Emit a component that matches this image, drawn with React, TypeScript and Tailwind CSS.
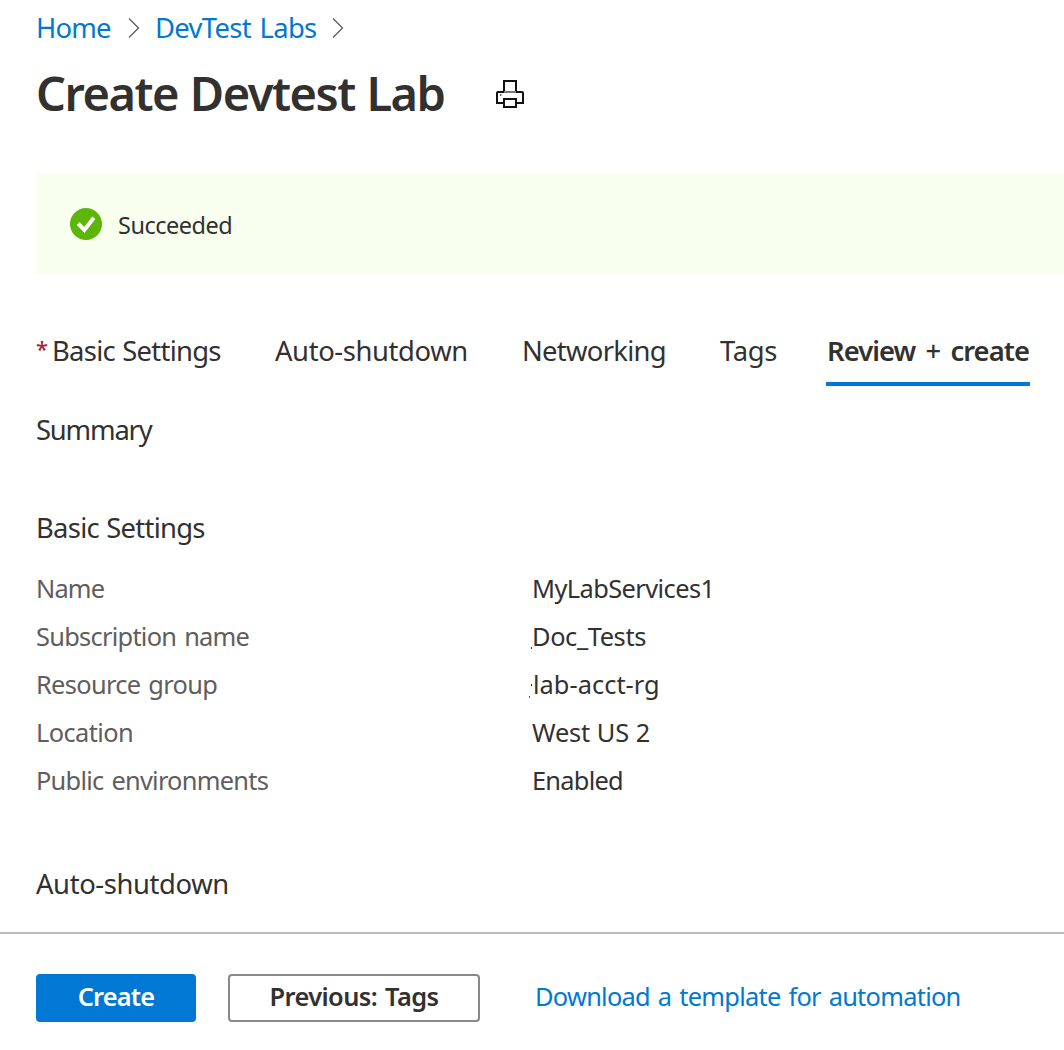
const details = [
  { label: "Name", labelClass: "tracking-[-0.85px]", value: "MyLabServices1", valueClass: "tracking-[-0.58px]" },
  { label: "Subscription name", labelClass: "tracking-[-0.73px] [word-spacing:2px]", value: "Doc_Tests", valueClass: "tracking-[-0.4px]", mark: "low" },
  { label: "Resource group", labelClass: "tracking-[-0.68px] [word-spacing:2px]", value: "lab-acct-rg", valueClass: "tracking-[0.03px] pl-px", mark: "pair" },
  { label: "Location", labelClass: "tracking-[-0.6px]", value: "West US 2", valueClass: "tracking-[-0.2px] [word-spacing:0.5px]" },
  { label: "Public environments", labelClass: "tracking-[-0.74px] [word-spacing:2px]", value: "Enabled", valueClass: "tracking-[-0.75px]" },
];

function Chevron() {
  return (
    <svg width="12" height="22" viewBox="0 0 12 22" fill="none" stroke="#605e5c" strokeWidth="1.3">
      <path d="M1 1.5 10.5 11 1 20.5" />
    </svg>
  );
}

function PrinterIcon() {
  return (
    <svg className="mt-1" width="28" height="28" viewBox="0 0 28 28" fill="none" stroke="#111" strokeWidth="2">
      <path d="M8 12V1h12v11" />
      <path d="M8 12h12" stroke="#777" />
      <path d="M8 12H2q-1 0-1 1v10h7M20 12h6q1 0 1 1v10h-7" />
      <path d="M8 19h12v8H8z" />
      <path d="M4 15h1.5" stroke="#333" strokeWidth="1.5" />
    </svg>
  );
}

function SuccessIcon() {
  return (
    <svg width="32" height="32" viewBox="0 0 32 32" fill="none">
      <circle cx="16" cy="16" r="16" fill="#5db50a" />
      <path d="m8.2 15.7 6.2 6.3L23.8 9.8" stroke="#fff" strokeWidth="4" />
    </svg>
  );
}

export default function App() {
  return (
    <div className="flex h-[1050px] w-[1064px] flex-col overflow-hidden bg-white font-['Noto_Sans',sans-serif] text-[25.4px] whitespace-nowrap text-[#323130]">
      <main className="min-h-0 flex-1 overflow-hidden pl-9">
        <nav className="flex h-[55px] items-center text-[27.4px] leading-[56px] text-[#0078d4]">
          <a className="w-[92px] tracking-[-0.85px]">Home</a>
          <Chevron />
          <a className="ml-[15px] w-[177px] tracking-[-0.65px] [word-spacing:2px]">DevTest Labs</a>
          <Chevron />
        </nav>
        <header className="flex h-[74px] items-center">
          <h1 className="w-[460px] pt-[2px] text-[47px] leading-[74px] font-semibold tracking-[-1.5px] [word-spacing:1px]">Create Devtest Lab</h1>
          <PrinterIcon />
        </header>

        <div className="mt-[45px] flex h-[100px] items-center rounded-l-[3px] bg-[#f8ffef] pl-[34px] text-[23.5px] leading-[102px] tracking-[-0.5px]">
          <SuccessIcon />
          <span className="ml-4 pt-[2px]">Succeeded</span>
        </div>

        <div className="mt-[45px] flex h-[67px] text-[27.4px] leading-[63px]">
          <div className="flex w-[239px]">
            <span className="w-[15px] text-[22px] leading-[59px] font-medium text-[#a4262c]">*</span>
            <span className="ml-px tracking-[-0.72px] [word-spacing:1px]">Basic Settings</span>
          </div>
          <div className="w-[247px] tracking-[-0.39px]">Auto-shutdown</div>
          <div className="w-[198px] tracking-[-0.72px]">Networking</div>
          <div className="w-[106px] tracking-[-0.35px]">Tags</div>
          <div className="w-[204px] border-b-4 border-[#0078d4] pl-px font-semibold tracking-[-0.95px] [word-spacing:4px]">
            Review <span className="font-medium">+</span> create
          </div>
        </div>

        <h2 className="mt-6 text-[27.4px] leading-[40px] tracking-[-1.2px]">Summary</h2>
        <h3 className="mt-[58px] text-[27.4px] leading-[40px] tracking-[-0.72px] [word-spacing:1px]">Basic Settings</h3>
        <dl className="mt-4 leading-[48px]">
          {details.map((d) => (
            <div key={d.label} className="flex h-12">
              <dt className={`w-[495px] text-[#605e5c] ${d.labelClass}`}>{d.label}</dt>
              <dd className={`relative ml-px ${d.valueClass}`}>
                {d.mark === "low" && <i className="absolute top-[35px] -left-px h-[2px] w-px bg-[#323130]" />}
                {d.mark === "pair" && (
                  <>
                    <i className="absolute top-[24px] -left-px h-[2px] w-px bg-[#323130]" />
                    <i className="absolute top-[36px] -left-[3px] h-[2px] w-px bg-[#605e5c]" />
                  </>
                )}
                {d.value}
              </dd>
            </div>
          ))}
        </dl>
        <h3 className="mt-[60px] text-[27.4px] leading-[40px] tracking-[-0.39px]">Auto-shutdown</h3>
      </main>

      <footer className="flex h-[118px] shrink-0 items-start border-t-2 border-[#bdbcbb] pt-10 pl-9">
        <button className="h-12 w-40 rounded-[4px] bg-[#0078d4] pb-1 leading-[44px] font-semibold tracking-[-0.85px] text-white">Create</button>
        <button className="ml-8 h-12 w-[252px] rounded-[4px] border-2 border-[#8a8886] pb-1 leading-10 font-semibold tracking-[-0.6px] [word-spacing:2px]">Previous: Tags</button>
        <a className="ml-[55px] leading-[44px] tracking-[-0.73px] [word-spacing:2px] text-[#0078d4]">Download a template for automation</a>
      </footer>
    </div>
  );
}
